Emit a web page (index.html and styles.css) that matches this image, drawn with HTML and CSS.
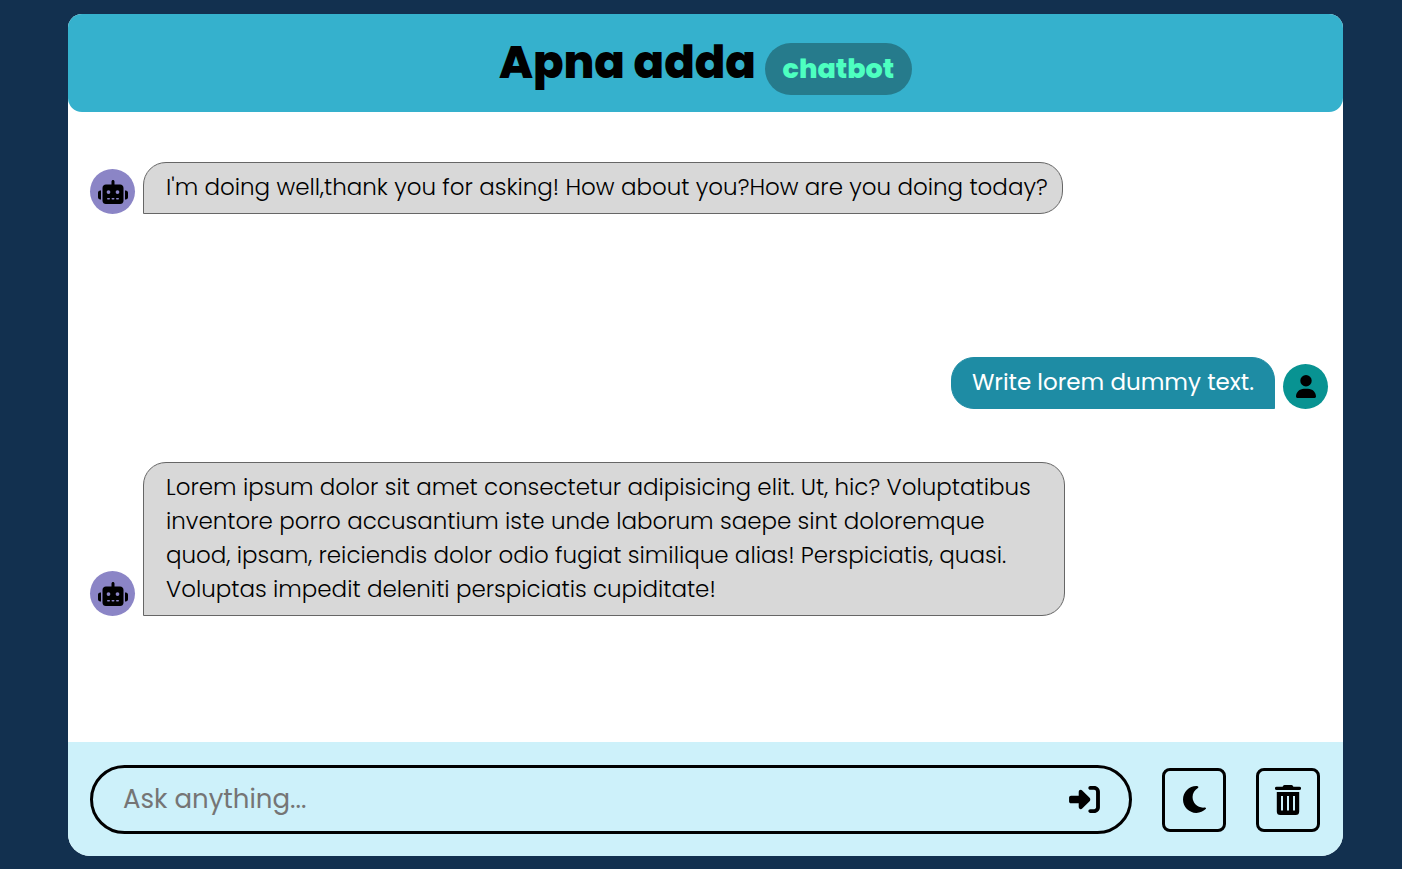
FILE: index.html
```html
<!DOCTYPE html>
<html lang="en">
<head>
<meta charset="utf-8">
<title>Apna adda chatbot</title>
<meta name="viewport" content="width=device-width, initial-scale=1">
<link rel="stylesheet" href="styles.css">
</head>
<body>
<svg class="sprite" aria-hidden="true">
  <symbol id="robot" viewBox="0 0 640 512"><path d="M320 0c17.700 0 32 14.300 32 32V96H472c39.800 0 72 32.200 72 72V440c0 39.800-32.200 72-72 72H168c-39.800 0-72-32.200-72-72V168c0-39.800 32.200-72 72-72H288V32c0-17.700 14.300-32 32-32zM208 384c-8.800 0-16 7.200-16 16s7.200 16 16 16h32c8.800 0 16-7.200 16-16s-7.200-16-16-16H208zm96 0c-8.800 0-16 7.200-16 16s7.200 16 16 16h32c8.800 0 16-7.200 16-16s-7.200-16-16-16H304zm96 0c-8.800 0-16 7.200-16 16s7.200 16 16 16h32c8.800 0 16-7.200 16-16s-7.200-16-16-16H400zM264 256a40 40 0 1 0-80 0 40 40 0 1 0 80 0zm152 40a40 40 0 1 0 0-80 40 40 0 1 0 0 80zM48 224H64V416H48c-26.500 0-48-21.500-48-48V272c0-26.500 21.500-48 48-48zm544 0c26.500 0 48 21.500 48 48v96c0 26.500-21.500 48-48 48H576V224h16z"/></symbol>
</svg>
<main class="chat">
  <header class="chat-header">
    <h1 class="title">Apna adda <span class="badge">chatbot</span></h1>
  </header>
  <section class="messages" aria-label="Messages">
    <div class="message">
      <span class="avatar avatar-bot"><svg class="icon-robot" aria-hidden="true"><use href="#robot"/></svg></span>
      <p class="bubble bubble-bot">I'm doing well,thank you for asking! How about you?How are you doing today?</p>
    </div>
    <div class="message message-user">
      <p class="bubble bubble-user">Write lorem dummy text.</p>
      <span class="avatar avatar-user"><svg class="icon-user" viewBox="0 0 448 512" aria-hidden="true"><path d="M224 256A128 128 0 1 0 224 0a128 128 0 1 0 0 256zm-45.700 48C79.800 304 0 383.800 0 482.300C0 498.700 13.300 512 29.700 512H418.300c16.400 0 29.700-13.300 29.700-29.700C448 383.800 368.200 304 269.700 304H178.300z"/></svg></span>
    </div>
    <div class="message">
      <span class="avatar avatar-bot"><svg class="icon-robot" aria-hidden="true"><use href="#robot"/></svg></span>
      <p class="bubble bubble-bot">Lorem ipsum dolor sit amet consectetur adipisicing elit. Ut, hic? Voluptatibus inventore porro accusantium iste unde laborum saepe sint doloremque quod, ipsam, reiciendis dolor odio fugiat similique alias! Perspiciatis, quasi. Voluptas impedit deleniti perspiciatis cupiditate!</p>
    </div>
  </section>
  <form class="composer">
    <div class="field">
      <input class="prompt" type="text" placeholder="Ask anything..." aria-label="Ask anything">
      <button class="send" type="button" aria-label="Send"><svg class="icon-send" viewBox="0 32 512 448" aria-hidden="true"><path d="M217.900 105.900L340.700 228.700c7.200 7.200 11.300 17.100 11.300 27.300s-4.100 20.100-11.300 27.300L217.900 406.100c-6.400 6.400-15 9.900-24 9.900c-18.700 0-33.900-15.200-33.900-33.900l0-62.100L32 320c-17.700 0-32-14.300-32-32l0-64c0-17.700 14.300-32 32-32l128 0 0-62.100c0-18.700 15.200-33.900 33.900-33.900c9 0 17.600 3.600 24 9.900zM352 416l64 0c17.700 0 32-14.300 32-32l0-256c0-17.700-14.300-32-32-32l-64 0c-17.700 0-32-14.300-32-32s14.300-32 32-32l64 0c53 0 96 43 96 96l0 256c0 53-43 96-96 96l-64 0c-17.700 0-32-14.300-32-32s14.300-32 32-32z"/></svg></button>
    </div>
    <button class="tool" type="button" aria-label="Dark mode"><svg class="icon-moon" viewBox="0 32 384 448" aria-hidden="true"><path d="M223.500 32C100 32 0 132.300 0 256S100 480 223.500 480c60.600 0 115.500-24.200 155.800-63.400c5-4.900 6.300-12.500 3.100-18.700s-10.100-9.700-17-8.500c-9.800 1.700-19.800 2.600-30.100 2.600c-96.900 0-175.500-78.800-175.500-176c0-65.800 36-123.100 89.300-153.300c6.100-3.500 9.200-10.500 7.700-17.300s-7.300-11.900-14.300-12.500c-6.300-.5-12.600-.8-19-.8z"/></svg></button>
    <button class="tool" type="button" aria-label="Clear chat"><svg class="icon-trash" viewBox="0 0 26 30" aria-hidden="true"><path fill-rule="evenodd" d="M9.500 0h7a1.500 1.500 0 0 1 1.300.8l.6 1H24.500a1.600 1.600 0 0 1 0 3.200H1.500a1.600 1.600 0 0 1 0-3.200H7.600l.6-1A1.500 1.500 0 0 1 9.500 0zM1.800 7h22.400v19.500a3.500 3.500 0 0 1-3.500 3.500H5.300a3.500 3.500 0 0 1-3.500-3.500zM6 11v14.500h2V11zm6 0v14.500h2V11zm6 0v14.500h2V11z"/></svg></button>
  </form>
</main>
</body>
</html>
```
FILE: styles.css
```css
* { box-sizing: border-box; }

body {
  margin: 0;
  min-height: 100vh;
  display: flex;
  padding: 14px 59px 13px 68px;
  background: #12304f;
  color: #000;
  font-family: Poppins, Inter, sans-serif;
}

.sprite { display: none; }

.chat {
  flex: 1;
  display: flex;
  flex-direction: column;
  background: #fff;
  border-radius: 14px 14px 22px 22px;
}

.chat-header {
  display: flex;
  justify-content: center;
  padding: 16px 24px;
  background: #35b1cd;
  border-radius: 14px;
}

.title {
  margin: 0;
  font-size: 45px;
  line-height: 66px;
  font-weight: 800;
}

.badge {
  display: inline-block;
  padding: 0 18px;
  border-radius: 26px;
  background: #267b8c;
  color: #4dffc0;
  font-size: 27px;
  line-height: 52px;
}

.messages {
  flex: 1;
  padding: 50px 15px 50px 22px;
}

.message {
  display: flex;
  align-items: flex-end;
  gap: 8px;
}

.message-user {
  justify-content: flex-end;
  margin: 143px 0 53px;
}

.avatar {
  flex: none;
  display: grid;
  place-items: center;
  width: 45px;
  height: 45px;
  border-radius: 50%;
}

.avatar-bot { background: #8b85c6; }
.avatar-user { background: #089392; }

.icon-robot { width: 30px; height: 24px; }
.icon-user { width: 20px; height: 23px; }

.bubble {
  margin: 0;
  max-width: 74.5%;
  padding: 7px 20px 9px;
  border: 1px solid #666;
  font-size: 23px;
  line-height: 34px;
}

.bubble-bot {
  padding-left: 22px;
  padding-right: 14px;
  background: #d8d8d8;
  border-radius: 23px 23px 23px 0;
  font-weight: 300;
}

.bubble-user {
  background: #1e8ca4;
  border-color: #1e8ca4;
  border-radius: 23px 23px 0 23px;
  color: #fff;
}

.composer {
  display: flex;
  align-items: center;
  gap: 30px;
  padding: 23px 23px 22px 22px;
  background: #cdf1fa;
  border-radius: 0 0 22px 22px;
}

.field {
  flex: 1;
  display: flex;
  align-items: center;
  height: 69px;
  padding: 0 29px 1px 30px;
  border: 3px solid #000;
  border-radius: 35px;
}

.prompt {
  flex: 1;
  min-width: 0;
  padding: 0;
  border: 0;
  outline: 0;
  background: none;
  color: #000;
  font: 400 26px/40px Poppins, Inter, sans-serif;
}

.prompt::placeholder { color: #757575; }

.send {
  display: flex;
  padding: 0;
  border: 0;
  background: none;
}

.tool {
  display: grid;
  place-items: center;
  width: 64px;
  height: 64px;
  padding: 0;
  border: 3px solid #000;
  border-radius: 8px;
  background: none;
}

.icon-send { width: 31px; height: 27px; }
.icon-moon { width: 23px; height: 27px; }
.icon-trash { width: 26px; height: 30px; }
```
